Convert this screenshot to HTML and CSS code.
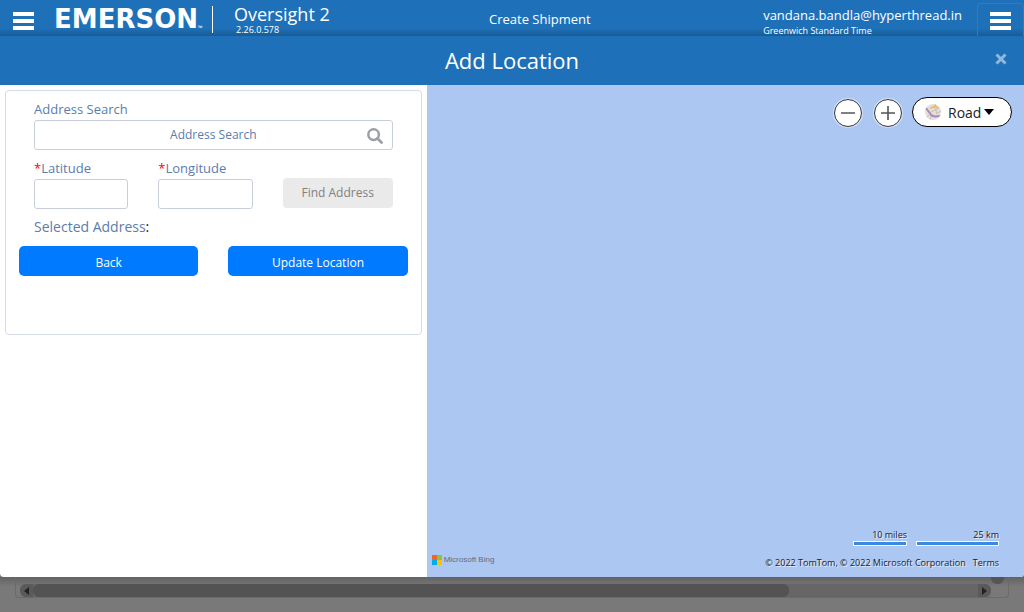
FILE: index.html
```html
<!DOCTYPE html>
<html lang="en">
<head>
<meta charset="utf-8">
<meta name="viewport" content="width=device-width, initial-scale=1">
<title>Oversight 2 - Add Location</title>
<link rel="stylesheet" href="styles.css">
</head>
<body>
<header class="topbar">
  <button class="menu-btn" type="button" aria-label="Main menu">
    <svg width="21" height="18" viewBox="0 0 21 18"><path d="M0 0h21v4H0zM0 7h21v4H0zM0 14h21v4H0z" fill="#fff"/></svg>
  </button>
  <div class="brand">
    <span class="logo">EMERSON</span><span class="tm">™</span>
  </div>
  <div class="product">
    <span class="product-name">Oversight 2</span>
    <span class="version">2.26.0.578</span>
  </div>
  <div class="page-name">Create Shipment</div>
  <div class="user">
    <span class="email">vandana.bandla@hyperthread.in</span>
    <span class="zone">Greenwich Standard Time</span>
  </div>
  <button class="toggle-btn" type="button" aria-label="User menu">
    <svg width="21" height="18" viewBox="0 0 21 18"><path d="M0 0h21v4H0zM0 7h21v4H0zM0 14h21v4H0z" fill="#fff"/></svg>
  </button>
</header>

<main class="modal">
  <div class="modal-head">
    <h1 class="modal-title">Add Location</h1>
    <button class="close" type="button" aria-label="Close">
      <svg width="12" height="12" viewBox="0 0 12 12"><path d="M1.5 1.5l9 9M10.5 1.5l-9 9" stroke="#8fb8dc" stroke-width="3"/></svg>
    </button>
  </div>
  <div class="modal-body">
    <section class="side">
      <form class="card">
        <div class="fields">
          <label class="label" for="search">Address Search</label>
          <div class="search">
            <input class="input search-input" id="search" type="text" placeholder="Address Search">
            <svg class="search-icon" width="16" height="16" viewBox="0 0 16 16" fill="none" stroke="#9a9fa8"><circle cx="6.6" cy="6.6" r="5.3" stroke-width="2.5"/><path d="M10.5 10.5l4 4" stroke-width="2.8" stroke-linecap="round"/></svg>
          </div>
          <div class="coords">
            <div class="field">
              <label class="label" for="lat"><span class="req">*</span>Latitude</label>
              <input class="input" id="lat" type="text">
            </div>
            <div class="field">
              <label class="label" for="lng"><span class="req">*</span>Longitude</label>
              <input class="input" id="lng" type="text">
            </div>
            <button class="find" type="button" disabled>Find Address</button>
          </div>
          <p class="selected"><span class="selected-label">Selected Address</span>:</p>
        </div>
        <div class="actions">
          <button class="primary" type="button">Back</button>
          <button class="primary" type="button">Update Location</button>
        </div>
      </form>
    </section>
    <section class="map" aria-label="Map">
      <div class="map-controls">
        <div class="zooms">
          <button class="zoom" type="button" aria-label="Zoom out">
            <svg width="14" height="14" viewBox="0 0 14 14"><path d="M0 7h14" stroke="#555" stroke-width="1.6"/></svg>
          </button>
          <button class="zoom" type="button" aria-label="Zoom in">
            <svg width="14" height="14" viewBox="0 0 14 14"><path d="M0 7h14M7 0v14" stroke="#555" stroke-width="1.6"/></svg>
          </button>
        </div>
        <button class="style-btn" type="button">
          <svg width="16" height="16" viewBox="0 0 16 16">
            <defs><clipPath id="disc"><circle cx="8" cy="8" r="8"/></clipPath></defs>
            <g clip-path="url(#disc)" fill="none">
              <path d="M0 0h16v16H0z" fill="#e4e0d8"/>
              <path d="M1 14l3-3M6 8l8-4M11 10l5-3M9 2l3 7M5 16l1-4" stroke="#c4c0b8"/>
              <path d="M5 4l4-1 2-3M10 2l3 2" stroke="#f2b45c" stroke-width="1.6"/>
              <path d="M0 4c4 1 4 7 8 8 3 1 4 0 8 0" stroke="#ad87c5" stroke-width="2"/>
            </g>
          </svg>
          <span>Road</span>
          <svg class="caret" width="10" height="6" viewBox="0 0 10 6"><path d="M0 0h10L5 6z"/></svg>
        </button>
      </div>
      <div class="map-foot">
        <div class="bing">
          <svg width="10" height="10" viewBox="0 0 10 10"><path d="M0 0h5v5H0z" fill="#f1652a"/><path d="M5 0h5v5H5z" fill="#8cc441"/><path d="M0 5h5v5H0z" fill="#00aef0"/><path d="M5 5h5v5H5z" fill="#fdc010"/></svg>
          <span>Microsoft Bing</span>
        </div>
        <div class="map-info">
          <div class="scales">
            <div class="scale scale-miles">10 miles</div>
            <div class="scale scale-km">25 km</div>
          </div>
          <div class="copyright"><span>© 2022 TomTom, © 2022 Microsoft Corporation</span><a class="terms" href="#">Terms</a></div>
        </div>
      </div>
    </section>
  </div>
</main>

<footer class="backdrop">
  <div class="scroll-frame">
    <div class="scrollbar">
      <span class="arrow arrow-left"><svg width="5" height="8" viewBox="0 0 5 8"><path d="M5 0v8L0 4z" fill="#222"/></svg></span>
      <span class="track"><span class="thumb"></span></span>
      <span class="arrow arrow-right"><svg width="5" height="8" viewBox="0 0 5 8"><path d="M0 0v8l5-4z" fill="#222"/></svg></span>
    </div>
    <span class="corner"></span>
  </div>
</footer>
</body>
</html>
```
FILE: styles.css
```css
* {
  box-sizing: border-box;
}

body {
  display: flex;
  flex-direction: column;
  min-height: 100vh;
  margin: 0;
  background: #797979;
  font-family: "Open Sans", "Noto Sans", sans-serif;
  font-size: 13px;
}

button,
input {
  font: inherit;
}

button {
  padding: 0;
  border: 0;
  background: none;
}

svg {
  display: block;
  flex: none;
}

/* Top bar */
.topbar {
  display: grid;
  grid-template-columns: 54px 159px 5fr auto 7fr 47px;
  height: 36px;
  background: linear-gradient(#1e71b9 28px, #195b93);
  color: #fff;
}

.menu-btn {
  display: flex;
  align-items: center;
  padding: 4px 0 0 13px;
}

.brand {
  display: flex;
  align-items: flex-end;
  height: 27px;
  margin-top: 6px;
  border-right: 1px solid #fff;
}

.logo {
  font-family: "DejaVu Sans", sans-serif;
  font-size: 26px;
  font-weight: 700;
  line-height: 27px;
}

.tm {
  font-size: 6px;
  line-height: 10px;
}

.product {
  display: flex;
  flex-direction: column;
  padding-left: 21px;
}

.product-name {
  font-size: 18px;
  line-height: 24px;
  margin-top: 2px;
}

.version {
  padding-left: 2px;
  font-size: 9px;
  line-height: 8px;
}

.page-name {
  line-height: 38px;
}

.user {
  display: flex;
  flex-direction: column;
  justify-self: end;
  padding: 6px 15px 0 0;
}

.email {
  line-height: 18px;
}

.zone {
  font-size: 9px;
  line-height: 14px;
}

.toggle-btn {
  display: flex;
  justify-content: center;
  padding-top: 8px;
  margin-top: 3px;
  border: 1px solid #2d7cc0;
  border-bottom: 0;
  border-radius: 4px 4px 0 0;
}

/* Modal */
.modal {
  display: flex;
  flex: 1;
  flex-direction: column;
  overflow: hidden;
  border-radius: 0 0 4px 4px;
  background: #fff;
}

.modal-head {
  display: grid;
  grid-template-columns: 40px 1fr 40px;
  align-items: center;
  height: 49px;
  background: #1e71b9;
}

.modal-title {
  grid-column: 2;
  margin: 0;
  padding-bottom: 2px;
  color: #fff;
  font-size: 22px;
  font-weight: 400;
  line-height: 30px;
  text-align: center;
}

.close {
  display: flex;
  padding: 0 0 3px 11px;
}

.modal-body {
  display: grid;
  flex: 1;
  grid-template-columns: 5fr 7fr;
}

.side {
  padding: 5px;
}

.card {
  min-height: 245px;
  padding: 8px 13px;
  border: 1px solid #d6dbe9;
  border-radius: 4px;
}

.fields {
  padding: 0 15px;
}

.label {
  display: block;
  margin-bottom: 1px;
  color: #5c7cab;
  line-height: 20px;
}

.req {
  color: #f00;
}

.input {
  display: block;
  width: 100%;
  height: 30px;
  padding: 0 8px;
  border: 1px solid #c8cedb;
  border-radius: 3px;
  background: #fff;
}

.search {
  position: relative;
}

.search-input {
  padding-bottom: 2px;
  text-align: center;
  font-size: 12px;
}

.search-input::placeholder {
  color: #5c7cab;
  opacity: 1;
}

.search-icon {
  position: absolute;
  top: 8px;
  right: 10px;
}

.coords {
  display: grid;
  grid-template-columns: 1fr 1fr 110px;
  gap: 30px;
  align-items: end;
  margin-top: 8px;
}

.find {
  height: 30px;
  border-radius: 4px;
  margin-bottom: 1px;
  padding-bottom: 2px;
  background: #eaeaea;
  color: #808080;
  font-size: 12px;
}

.selected {
  margin: 8px 0 9px;
  color: #222;
  font-size: 14px;
  line-height: 20px;
}

.selected-label {
  color: #5c7cab;
}

.actions {
  display: grid;
  grid-template-columns: 1fr 1fr;
  gap: 30px;
}

.primary {
  height: 30px;
  padding-top: 2px;
  border-radius: 5px;
  background: #007bff;
  color: #fff;
  font-size: 12px;
}

/* Map */
.map {
  display: flex;
  flex-direction: column;
  justify-content: space-between;
  background: #acc7f2;
}

.map-controls {
  display: flex;
  justify-content: flex-end;
  gap: 10px;
  padding: 12px 12px 0 0;
}

.zooms {
  display: flex;
  align-items: flex-end;
  gap: 12px;
}

.zoom {
  display: flex;
  align-items: center;
  justify-content: center;
  width: 28px;
  height: 28px;
  border: 1px solid #333;
  border-radius: 50%;
  background: #fff;
  box-shadow: 0 0 0 1px #d5e2f8;
}

.style-btn {
  display: flex;
  align-items: center;
  gap: 7px;
  width: 100px;
  height: 30px;
  padding-left: 12px;
  border: 1px solid #000;
  border-radius: 15px;
  background: #fff;
  color: #222;
  font-size: 14px;
}

.caret {
  margin-left: -4px;
}

.map-foot {
  display: flex;
  align-items: flex-end;
  justify-content: space-between;
  padding: 0 25px 8px 5px;
}

.bing {
  display: flex;
  align-items: center;
  gap: 2px;
  padding-bottom: 3px;
  color: #666c78;
  font-family: "Liberation Sans", sans-serif;
  font-size: 8px;
  line-height: 12px;
}

.map-info {
  color: #222;
  font-size: 9px;
  line-height: 12px;
  text-shadow: 1px 1px 0 #e4ecfa;
}

.scales {
  display: flex;
  justify-content: flex-end;
  gap: 9px;
  margin-bottom: 11px;
}

.scale {
  text-align: right;
}

.scale::after {
  display: block;
  height: 3px;
  border: 1px solid #fff;
  background: #3b8ae0;
  content: "";
}

.scale-miles {
  width: 54px;
}

.scale-km {
  width: 83px;
}

.copyright {
  display: flex;
  gap: 7px;
}

.terms {
  color: inherit;
  text-decoration: none;
}

/* Dimmed page behind the modal */
.backdrop {
  height: 35px;
  padding: 0 15px;
  background: linear-gradient(#636363, #797979 10px);
}

.scroll-frame {
  display: flex;
  align-items: flex-start;
  height: 21px;
  padding: 0 4px;
  border: 1px solid #6a6a6a;
  border-top: 0;
  border-radius: 0 0 4px 4px;
}

.scrollbar {
  display: flex;
  flex: 1;
  height: 13px;
  margin-top: 7px;
  overflow: hidden;
  border-radius: 6px;
  background: #666;
}

.arrow {
  display: flex;
  align-items: center;
  justify-content: center;
  width: 13px;
  background: #5a5a5a;
}

.track {
  flex: 1;
}

.thumb {
  display: block;
  width: 80%;
  height: 13px;
  border-radius: 6px;
  background: #535353;
}

.corner {
  width: 13px;
  height: 7px;
  border-radius: 0 0 6px 6px;
  background: #555;
}
```
